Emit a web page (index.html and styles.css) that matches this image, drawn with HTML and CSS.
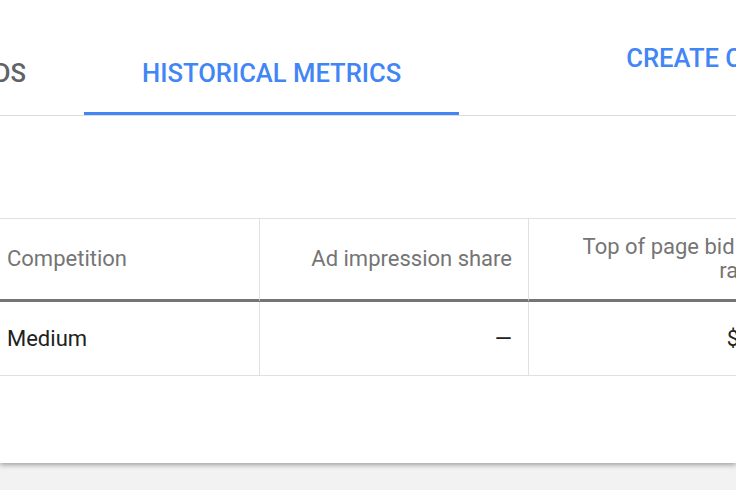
FILE: index.html
```html
<!DOCTYPE html>
<html lang="en">
<head>
<meta charset="utf-8">
<title>Keyword Planner</title>
<link rel="stylesheet" href="styles.css">
</head>
<body>
<div class="card">
  <div class="tabbar">
    <div class="tab tab-first">NEGATIVE KEYWORDS</div>
    <div class="tab tab-active">HISTORICAL METRICS</div>
    <div class="create">CREATE CAMPAIGN</div>
  </div>
  <div class="grid">
    <div class="cell head">Competition</div>
    <div class="cell head right divided">Ad impression share</div>
    <div class="cell head right divided">Top of page bid (low range)</div>
    <div class="cell data">Medium</div>
    <div class="cell data right divided">—</div>
    <div class="cell data right divided">$0.61</div>
  </div>
</div>
</body>
</html>
```
FILE: styles.css
```css
html, body {
  margin: 0;
  padding: 0;
}
body {
  background: #f2f2f2;
  font-family: Roboto, "Noto Sans", Arial, sans-serif;
  overflow: hidden;
  width: 736px;
  height: 490px;
}
.card {
  background: #fff;
  height: 463px;
  box-shadow: 0 2px 5px rgba(0, 0, 0, 0.35);
  overflow: hidden;
}
.tabbar {
  display: flex;
  align-items: flex-start;
  border-bottom: 1px solid #dcdcdc;
  height: 115px;
  white-space: nowrap;
}
.tab {
  box-sizing: border-box;
  height: 115px;
  padding: 58px 58px 0;
  font-size: 25.6px;
  line-height: 30px;
  font-weight: 500;
  flex: none;
}
.tab-first {
  width: 84px;
  padding-left: 0;
  display: flex;
  justify-content: flex-end;
  color: #5f6368;
}
.tab-active {
  color: #4285f4;
  border-bottom: 3px solid #4285f4;
}
.create {
  flex: none;
  margin-left: 167px;
  padding-top: 43px;
  font-size: 25.6px;
  line-height: 30px;
  font-weight: 500;
  color: #4285f4;
}
.grid {
  margin-top: 102px;
  margin-left: -9px;
  display: grid;
  grid-template-columns: 268px 269px 270px;
  border-top: 1px solid #e0e0e0;
  border-bottom: 1px solid #e0e0e0;
}
.cell {
  box-sizing: border-box;
  padding: 0 16px;
  display: flex;
  align-items: center;
  font-size: 22px;
  line-height: 24px;
}
.head {
  height: 83px;
  color: #757575;
  border-bottom: 3px solid #757575;
}
.data {
  height: 73px;
  color: #212121;
}
.right {
  justify-content: flex-end;
  text-align: right;
}
.divided {
  border-left: 1px solid #e0e0e0;
}
```
